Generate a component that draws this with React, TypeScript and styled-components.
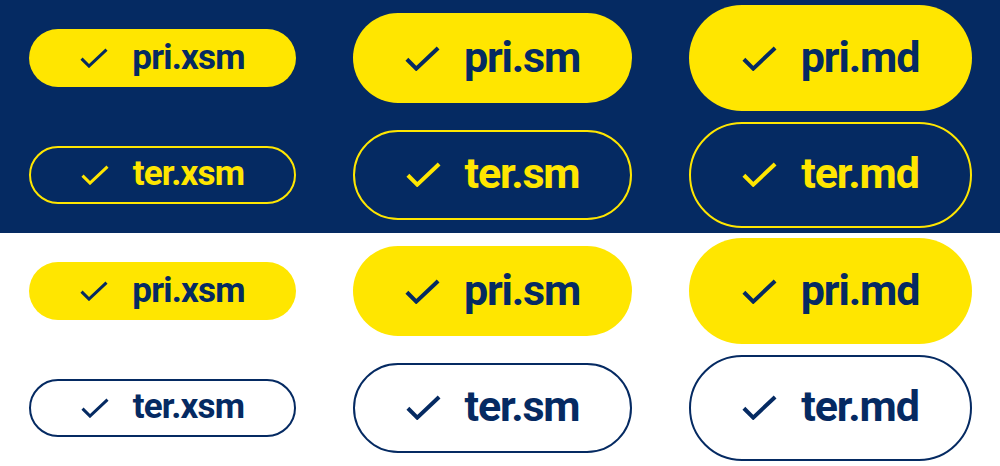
import React from 'react';
import styled, { createGlobalStyle, css } from 'styled-components';

const NAVY = '#052a62';
const YELLOW = '#ffe600';

type Size = 'xsm' | 'sm' | 'md';
type Variant = 'pri' | 'ter';
type Surface = 'dark' | 'light';

const sizes: Record<Size, { w: number; h: number; font: number; track: number; icon: number; stroke: number }> = {
    xsm: { w: 267, h: 58, font: 35, track: -0.8, icon: 28, stroke: 3 },
    sm: { w: 279, h: 90, font: 43, track: -1.2, icon: 35, stroke: 3.2 },
    md: { w: 283, h: 106, font: 43, track: -1.1, icon: 35, stroke: 3.2 },
};

const GlobalStyle = createGlobalStyle`
    html, body {
        margin: 0;
        padding: 0;
        background: #ffffff;
    }
    body {
        font-family: Roboto, "Liberation Sans", sans-serif;
    }
`;

const Page = styled.main`
    width: 1000px;
    display: flex;
    flex-direction: column;
`;

const Section = styled.section<{ $surface: Surface }>`
    height: 233px;
    box-sizing: border-box;
    padding-left: 29px;
    display: grid;
    grid-template-columns: 267px 279px 283px;
    grid-template-rows: 1fr 1fr;
    column-gap: 57px;
    align-items: center;
    background-color: ${p => (p.$surface === 'dark' ? NAVY : '#ffffff')};
`;

const Button = styled.button<{ $size: Size; $variant: Variant; $surface: Surface }>`
    box-sizing: border-box;
    width: ${p => sizes[p.$size].w}px;
    height: ${p => sizes[p.$size].h}px;
    border-radius: ${p => sizes[p.$size].h / 2}px;
    display: flex;
    align-items: center;
    justify-content: center;
    column-gap: 24px;
    padding: 0;
    margin: 0;
    font-family: Roboto, "Liberation Sans", sans-serif;
    font-weight: 700;
    font-size: ${p => sizes[p.$size].font}px;
    letter-spacing: ${p => sizes[p.$size].track}px;
    line-height: 1;
    cursor: pointer;

    ${p =>
        p.$variant === 'pri'
            ? css`
                  background-color: ${YELLOW};
                  border: none;
                  color: ${NAVY};
              `
            : css`
                  background-color: transparent;
                  border: 2.4px solid ${p.$surface === 'dark' ? YELLOW : NAVY};
                  color: ${p.$surface === 'dark' ? YELLOW : NAVY};
              `}
`;

const Label = styled.span`
    display: block;
    padding-bottom: 2px;
`;

const CheckIcon = ({ width, stroke }: { width: number; stroke: number }) => (
    <svg width={width} height={width * 0.72} viewBox="0 0 28 20" fill="none">
        <polyline points="1.5,10.5 9,18 26.5,1.5" stroke="currentColor" strokeWidth={stroke} strokeLinejoin="miter" />
    </svg>
);

const rows: Variant[] = ['pri', 'ter'];
const cols: Size[] = ['xsm', 'sm', 'md'];

function ButtonGrid({ surface }: { surface: Surface }) {
    return (
        <Section $surface={surface}>
            {rows.map(variant =>
                cols.map(size => (
                    <Button key={variant + size} $size={size} $variant={variant} $surface={surface}>
                        <CheckIcon width={sizes[size].icon} stroke={sizes[size].stroke} />
                        <Label>{variant}.{size}</Label>
                    </Button>
                ))
            )}
        </Section>
    );
}

export default function App() {
    return (
        <>
            <GlobalStyle />
            <Page>
                <ButtonGrid surface="dark" />
                <ButtonGrid surface="light" />
            </Page>
        </>
    );
}
